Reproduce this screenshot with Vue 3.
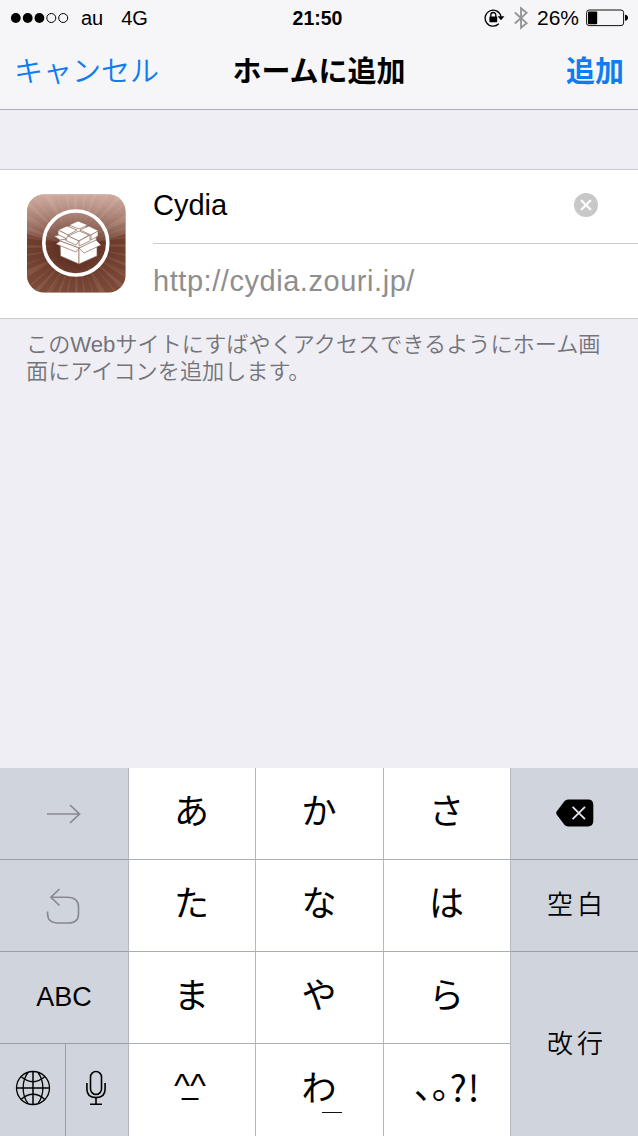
<script setup>
const kanaKeys = [
  { label: 'あ', col: 2, row: 1 },
  { label: 'か', col: 3, row: 1 },
  { label: 'さ', col: 4, row: 1 },
  { label: 'た', col: 2, row: 2 },
  { label: 'な', col: 3, row: 2 },
  { label: 'は', col: 4, row: 2 },
  { label: 'ま', col: 2, row: 3 },
  { label: 'や', col: 3, row: 3 },
  { label: 'ら', col: 4, row: 3 },
]
const rays = Array.from({ length: 48 }, (_, i) => {
  const a = (i * 7.5 * Math.PI) / 180 + (i % 4) * 0.03
  const b = a + 0.03 + (i % 3) * 0.025
  const pt = (t, r) => `${(50 + r * Math.cos(t)).toFixed(1)} ${(52 + r * Math.sin(t)).toFixed(1)}`
  return `M${pt(a, 22)}L${pt(a, 80)}L${pt(b, 80)}Z`
}).join('')
</script>

<template>
  <div class="screen">
    <header class="top">
      <div class="status">
        <div class="side">
          <svg class="signal" width="60" height="14" viewBox="0 0 60 14">
            <circle cx="5.8" cy="7" r="4.9" />
            <circle cx="17.7" cy="7" r="4.9" />
            <circle cx="29.4" cy="7" r="4.9" />
            <g fill="none" stroke="#000" stroke-width="1">
              <circle cx="41.3" cy="7" r="4.5" />
              <circle cx="53.2" cy="7" r="4.5" />
            </g>
          </svg>
          <span class="carrier">au</span>
          <span class="network">4G</span>
        </div>
        <span class="time">21:50</span>
        <div class="side right">
          <svg class="lock" width="22" height="20" viewBox="0 0 22 20">
            <path d="M14.8 15.8A8 8 0 1 1 17 8.600" fill="none" stroke="#000" stroke-width="1.3" />
            <path d="M13.600 8.300H20.400L17 12.300Z" />
            <path d="M6.800 9V7A2.500 2.500 0 0 1 11.800 7V9" fill="none" stroke="#000" stroke-width="1.3" />
            <rect x="5.400" y="8.600" width="7.800" height="5.600" rx=".8" />
          </svg>
          <svg class="bluetooth" width="14" height="24" viewBox="0 0 14 24">
            <path d="M.9 6.500L12.600 17.200L7 21.800V2.200L12.600 6.900L.9 17.500" fill="none" stroke="#929297" stroke-width="1.8" />
          </svg>
          <span class="percent">26%</span>
          <svg class="battery" width="43" height="18" viewBox="0 0 43 18">
            <rect x=".6" y="1" width="37" height="15.6" rx="2.6" fill="none" stroke="#111" stroke-width="1" />
            <rect x="2" y="2.4" width="9.2" height="12.8" rx="1" />
            <path d="M39 5.8Q42 6.2 42 8.8T39 11.8Z" />
          </svg>
        </div>
      </div>
      <nav class="nav">
        <a class="cancel">キャンセル</a>
        <h1>ホームに追加</h1>
        <a class="add">追加</a>
      </nav>
    </header>

    <section class="card">
      <svg class="app-icon" width="100" height="99" viewBox="0 0 100 99">
        <defs>
          <linearGradient id="base" x1="0" y1="0" x2="0" y2="1">
            <stop offset="0" stop-color="#93604f" />
            <stop offset=".5" stop-color="#6a392a" />
            <stop offset="1" stop-color="#7c4a39" />
          </linearGradient>
          <radialGradient id="glow" cx=".5" cy=".53" r=".65">
            <stop offset="0" stop-color="#43190e" stop-opacity=".75" />
            <stop offset="1" stop-color="#8a5948" stop-opacity=".1" />
          </radialGradient>
          <linearGradient id="gloss" x1="0" y1="0" x2="0" y2="1">
            <stop offset="0" stop-color="#ffe9e0" stop-opacity=".56" />
            <stop offset="1" stop-color="#ffe9e0" stop-opacity=".1" />
          </linearGradient>
          <clipPath id="shape"><rect x="1" y=".5" width="98.500" height="98" rx="17" /></clipPath>
        </defs>
        <g clip-path="url(#shape)">
          <rect width="100" height="99" fill="url(#base)" />
          <rect width="100" height="99" fill="url(#glow)" />
          <path :d="rays" fill="#e0a78e" opacity=".16" />
          <path d="M0 0H100V40Q75 49 50 49T0 40Z" fill="url(#gloss)" />
          <circle cx="49.8" cy="49" r="32" fill="none" stroke="#fff" stroke-width="3.6" />
          <g fill="#fff" stroke="#8d6456" stroke-width=".7" stroke-linejoin="round">
            <path d="M34 46L53 54V70L34.500 62Z" />
            <path d="M53 54L71 47V62L53 70Z" />
            <path d="M32 37L52 28L71 38L70 48L53 54L34 47Z" />
            <path d="M32 36L41 32L51 36L42 41Z" />
            <path d="M43 31L52 27L62 31L53 35Z" />
            <path d="M42 42L53 37L63 41L53 47Z" />
            <path d="M54 36L63 32L73 37L65 41Z" />
            <path d="M32 36V41L42 46V41Z" />
            <path d="M42 42L39 46L50 51L53 47Z" />
            <path d="M53 47V52L64 47V41Z" />
            <path d="M65 41V46L72 42V37Z" />
            <path d="M34 46L28 42L33 41L41 45Z" />
            <path d="M34 47L53 54L50 58L30 50Z" />
            <path d="M53 54L70 46L75 51L58 59Z" />
          </g>
        </g>
      </svg>
      <div class="fields">
        <div class="field">
          <span class="name">Cydia</span>
          <svg class="clear" width="26" height="26" viewBox="0 0 26 26">
            <circle cx="13" cy="13" r="12" fill="#c8c8c9" />
            <path d="M8.7 8.7L17.3 17.3M17.3 8.7L8.7 17.3" stroke="#fff" stroke-width="2.2" stroke-linecap="round" />
          </svg>
        </div>
        <div class="field url">http://cydia.zouri.jp/</div>
      </div>
    </section>

    <p class="note">このWebサイトにすばやくアクセスできるようにホーム画<br />面にアイコンを追加します。</p>

    <div class="keyboard">
      <div class="key dark next">
        <svg width="36" height="22" viewBox="0 0 36 22" fill="none" stroke="#868990" stroke-width="1.7">
          <path d="M1 11H33M24 2L33.500 11L24 20" />
        </svg>
      </div>
      <div class="key dark undo">
        <svg width="36" height="38" viewBox="0 0 36 38" fill="none" stroke="#868990" stroke-width="1.6">
          <path d="M13.500 2L4.800 10.200L13.500 18.500M5 10.200H21Q32.500 10.200 32.500 20V27Q32.500 36 22 36H12Q1.600 36 1.600 27V24.600" />
        </svg>
      </div>
      <div class="key dark abc">ABC</div>
      <div class="split">
        <div class="key dark globe">
          <svg width="36" height="36" viewBox="0 0 36 36" fill="none" stroke="#000" stroke-width="1.3">
            <circle cx="18" cy="18" r="16.500" />
            <path d="M18 1.500V34.500M1.500 18H34.500" stroke-width="1.5" />
            <path d="M13 2.500C6.500 11 6.500 25 13 33.500M23 2.500C29.500 11 29.500 25 23 33.500M6 6.600Q18 17 30 6.600M6 29.400Q18 19 30 29.400" />
          </svg>
        </div>
        <div class="key dark mic">
          <svg width="22" height="36" viewBox="0 0 22 36" fill="none" stroke="#000" stroke-width="1.6">
            <rect x="5.500" y="1.500" width="11" height="23" rx="5.500" />
            <path d="M1.900 13V19Q1.900 27.600 11 27.600T20.100 19V13M11 27.600V34M5 34.300H17" />
          </svg>
        </div>
      </div>

      <div
        v-for="k in kanaKeys"
        :key="k.label"
        class="key kana"
        :style="{ gridColumn: k.col, gridRow: k.row }"
      ><span>{{ k.label }}</span></div>
      <div class="key face"><span class="eyes">^^</span><span class="mouth">_</span></div>
      <div class="key kana wa"><span>わ</span><i></i></div>
      <div class="key punct"><span class="stops">、。</span><span class="marks">?!</span></div>

      <div class="key dark delete">
        <svg width="38" height="28" viewBox="0 0 38 28">
          <path d="M12 .5H32Q37.300.5 37.300 5.800V22Q37.300 27.400 32 27.400H12Q10 27.400 8.600 26L1 16Q-.6 14 1 12L8.600 2Q10 .5 12 .5Z" />
          <path d="M16.600 7.800L29 20.200M29 7.800L16.600 20.200" stroke="#e3e6ec" stroke-width="1.8" />
        </svg>
      </div>
      <div class="key dark word space">空白</div>
      <div class="key dark word enter">改行</div>
    </div>
  </div>
</template>

<style>
body {
  margin: 0;
}
</style>

<style scoped>
.screen {
  width: 638px;
  height: 1136px;
  display: flex;
  flex-direction: column;
  overflow: hidden;
  background: #efeef4;
  color: #000;
  font-family: "Liberation Sans", "Noto Sans CJK JP", sans-serif;
}
.top {
  box-sizing: border-box;
  height: 110px;
  background: #f6f6f8;
  border-bottom: 1px solid #aeafb6;
}
.status {
  height: 36px;
  display: grid;
  grid-template-columns: 1fr auto 1fr;
  align-items: center;
  font-size: 20px;
  line-height: 36px;
}
.side {
  display: flex;
  align-items: center;
}
.right {
  justify-content: flex-end;
  padding-right: 9px;
}
.signal {
  margin-left: 10px;
}
.carrier {
  margin-left: 11px;
}
.network {
  margin-left: 18px;
}
.time {
  font-size: 19.5px;
  font-weight: 700;
  padding-right: 3px;
}
.lock {
  margin-right: 8px;
}
.bluetooth {
  margin-right: 9px;
}
.percent {
  font-size: 21px;
  margin-right: 7px;
}
.nav {
  display: grid;
  grid-template-columns: 1fr auto 1fr;
  padding: 0 14px;
  font-family: "Noto Sans CJK JP", sans-serif;
  font-size: 29px;
  line-height: 67px;
  height: 73px;
}
h1 {
  margin: 0;
  font-size: 29px;
  font-weight: 700;
}
.cancel,
.add {
  color: #0f7cf3;
}
.cancel {
  font-weight: 350;
}
.add {
  text-align: right;
  font-weight: 700;
}
.card {
  box-sizing: border-box;
  height: 150px;
  margin-top: 59px;
  display: flex;
  background: #fff;
  border-top: 1px solid #ccccd0;
  border-bottom: 1px solid #ccccd0;
}
.app-icon {
  margin: 24px 27px 0 26px;
  flex: none;
}
.fields {
  flex: 1;
}
.field {
  box-sizing: border-box;
  height: 74px;
  display: flex;
  align-items: center;
  justify-content: space-between;
  padding: 0 39px 3px 0;
  font-size: 29px;
  border-bottom: 1px solid #ccccd0;
}
.url {
  padding: 0;
  color: #8e8e8e;
  border: 0;
  letter-spacing: 0.55px;
}
.note {
  margin: 12px 0 0 26px;
  font-size: 22.15px;
  line-height: 27px;
  font-weight: 350;
  color: #74747a;
  white-space: nowrap;
}
.keyboard {
  margin-top: auto;
  height: 368px;
  display: grid;
  grid-template-columns: 129px 127px 128px 127px 127px;
  grid-template-rows: repeat(4, 92px);
  background: #fff;
}
.key {
  box-sizing: border-box;
  display: flex;
  align-items: center;
  justify-content: center;
  border-right: 1px solid #b4b8be;
  border-bottom: 1px solid #aaaeb5;
}
.dark {
  background: #d0d4dc;
  border-bottom-color: #9a9fa8;
}
.next,
.undo,
.abc,
.split {
  grid-column: 1;
}
.next {
  grid-row: 1;
}
.undo {
  grid-row: 2;
  padding: 1px 1px 0 0;
}
.abc {
  grid-row: 3;
  font-size: 27px;
}
.split {
  grid-row: 4;
  display: grid;
  grid-template-columns: 66px 63px;
}
.globe,
.mic,
.face,
.wa,
.punct {
  border-bottom: 0;
}
.globe {
  border-right-color: #9a9fa8;
  padding-bottom: 4px;
}
.mic {
  padding: 0 2px 4px 0;
}
.kana {
  font-family: "Noto Sans CJK JP", sans-serif;
  font-size: 35px;
  line-height: 50px;
  padding: 0 1px 9px 0;
}
.face {
  grid-column: 2;
  grid-row: 4;
  flex-direction: column;
  justify-content: flex-start;
  padding: 29px 4px 0 0;
}
.eyes {
  font-size: 34px;
  line-height: 24px;
  height: 20px;
}
.mouth {
  font-size: 29px;
  line-height: 8px;
  margin-top: -13px;
}
.wa {
  grid-column: 3;
  grid-row: 4;
  position: relative;
}
.wa i {
  position: absolute;
  left: 66px;
  top: 68px;
  width: 20px;
  height: 1px;
  background: #111;
}
.punct {
  grid-column: 4;
  grid-row: 4;
  font-family: "Noto Sans CJK JP", sans-serif;
  font-size: 36px;
  line-height: 50px;
  padding-bottom: 8px;
}
.stops {
  font-feature-settings: "halt";
  padding-bottom: 7px;
}
.marks {
  letter-spacing: 1px;
}
.delete,
.space,
.enter {
  grid-column: 5;
  border-right: 0;
}
.delete {
  grid-row: 1;
  padding-bottom: 1px;
}
.space {
  grid-row: 2;
}
.enter {
  grid-row: 3 / 5;
  border-bottom: 0;
}
.word {
  font-family: "Noto Sans CJK JP", sans-serif;
  font-weight: 350;
  font-size: 26px;
  letter-spacing: 4px;
  padding: 0 0 6px 5px;
}
</style>
